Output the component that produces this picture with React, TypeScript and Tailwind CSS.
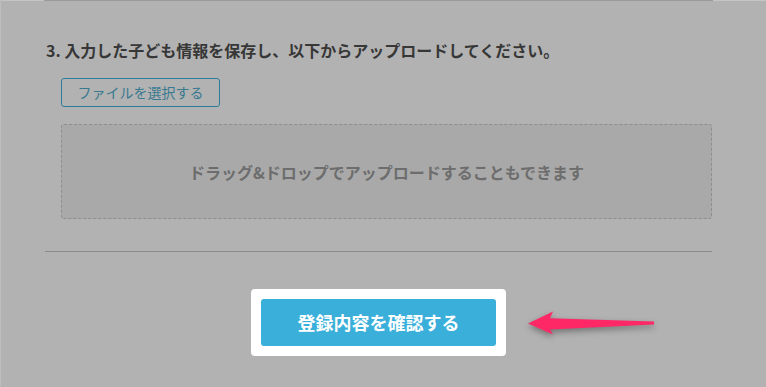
import React from "react";

export default function App() {
  return (
    <div
      className="relative w-[766px] h-[387px] overflow-hidden bg-[#b2b2b2] border-l border-l-[#bdbdbd]"
      style={{ fontFamily: '"Noto Sans CJK JP", "Noto Sans", sans-serif' }}
    >
      <div className="flex h-px">
        <div className="w-[43px] bg-[#c4c4c4]" />
        <div className="w-[669px] bg-[#9a9a9a]" />
        <div className="flex-1 bg-[#c4c4c4]" />
      </div>
      <div className="ml-[44px] w-[667px]">
        <h2 className="pt-[37px] pl-[1px] text-[16px] leading-[24px] font-bold text-[#373737]">
          3. 入力した子ども情報を保存し、以下からアップロードしてください。
        </h2>
        <div className="mt-[16px] ml-[16px]">
          <button className="w-[159px] h-[29px] rounded-[3px] border border-[#2b7e98] text-[14px] leading-[27px] text-[#387990] text-center">
            ファイルを選択する
          </button>
        </div>
        <div className="mt-[17px] ml-[16px] w-[651px] h-[95px] rounded-[3px] border border-dashed border-[#8e8e8e] bg-[#a9a9a9] flex items-center justify-center">
          <span className="text-[16px] font-bold text-[#6d6d6d]">
            ドラッグ&amp;ドロップでアップロードすることもできます
          </span>
        </div>
        <div className="mt-[32px] h-px bg-[#8a8a8a]" />
        <div className="mt-[37px] flex justify-center">
          <div className="w-[255px] h-[67px] rounded-[4px] bg-white p-[10px]">
            <button className="w-full h-full rounded-[3px] bg-[#3aafda] text-white text-[18px] font-bold">
              登録内容を確認する
            </button>
          </div>
        </div>
      </div>
      <svg
        className="absolute left-[520px] top-[305px]"
        width="145"
        height="40"
        viewBox="520 305 145 40"
        style={{ filter: "drop-shadow(0 3px 3px rgba(0,0,0,0.35))" }}
      >
        <path
          d="M527,323.5 L552,311.5 L549,318.3 L653,321.5 L653,324.5 L549,329.5 L552,334.5 Z"
          fill="#fe2867"
        />
      </svg>
    </div>
  );
}
